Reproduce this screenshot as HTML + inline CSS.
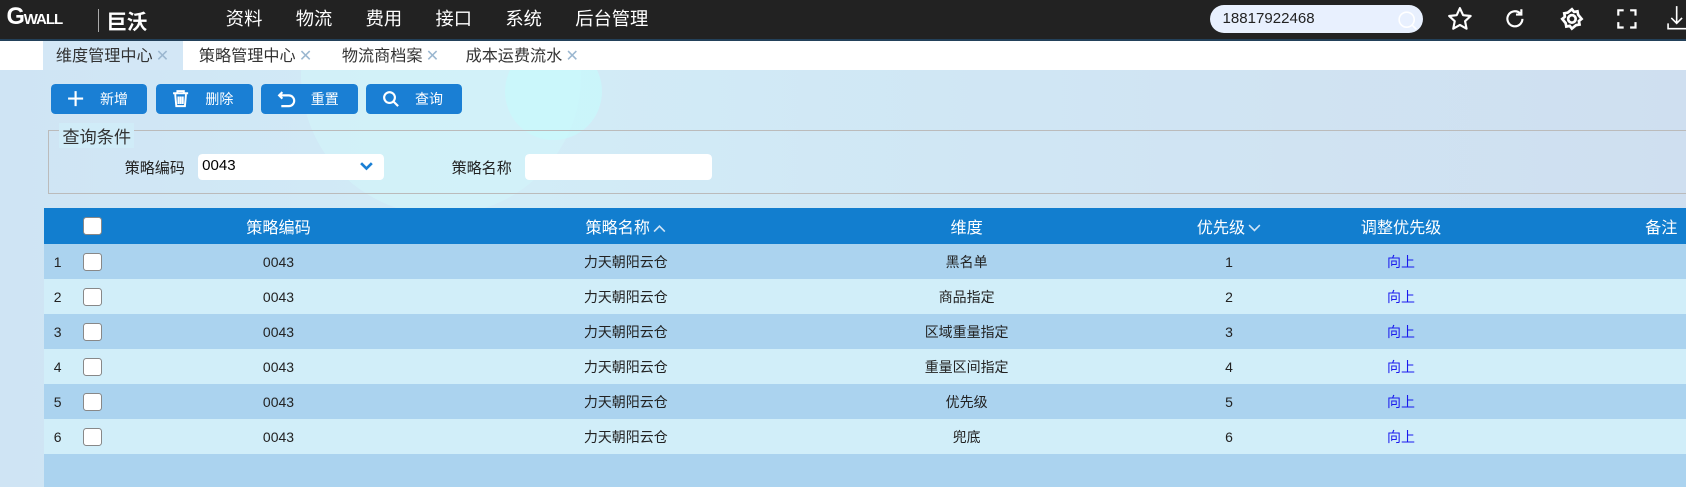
<!DOCTYPE html>
<html><head><meta charset="utf-8"><style>
html,body{margin:0;padding:0;overflow:hidden}
body{width:1686px;height:487px;font-family:"Liberation Sans","Noto Sans CJK SC",sans-serif}
#w{zoom:1.07526;width:1568px;height:453px;position:relative;background:linear-gradient(90deg,#cfe4f4,#d2ecf7 30%,#d0e6f4 60%,#cfdff0);overflow:hidden}
.a{position:absolute}
#hd{left:0;top:0;width:1568px;height:36px;background:#222}
#hd .m{top:5px;color:#fff;font-size:17px}
#line{top:36px;left:0;width:1568px;height:2px;background:#23415a}
#tabs{top:38px;left:0;width:1568px;height:27px;background:#fff}
.tab{top:38px;height:27px;line-height:29px;font-size:15px;color:#333}
.tab i{font-style:normal;color:#9bb7d0;margin-left:3px}
.btn{top:78px;height:28px;width:90px;background:#1a7fd4;border-radius:4px;color:#fff;font-size:13px;line-height:28px}
.btn span{position:absolute;left:46px}
.btn svg{position:absolute;left:15px;top:6px}
#fs{left:45px;top:121px;width:1530px;height:58px;border:1px solid #bbb;border-right:none}
.lab{font-size:14px;color:#222}
.inp{background:#fff;border-radius:4px;height:24px}
table{position:absolute;left:41px;top:193px;width:1527px;border-collapse:collapse;font-size:13px;color:#222;table-layout:fixed}
th{background:#127ecf;color:#fff;font-weight:normal;font-size:15px;height:34px;padding:0}
td{height:32.6px;padding:0;text-align:center}
tr.o td{background:#abd3ef}tr.e td{background:#d1eef9}
.cb{display:inline-block;width:15px;height:15px;background:#fff;border:1px solid #888;border-radius:3px;vertical-align:middle}
td.n{text-align:left;padding-left:9px}
.up{color:#1a1aee}
.ch{display:inline-block;vertical-align:middle;margin-left:3px}
</style></head><body><div id="w">
<div class="a" style="left:280px;top:-60px;width:260px;height:260px;border-radius:50%;background:rgba(210,245,250,.6)"></div>
<div class="a" style="left:470px;top:40px;width:90px;height:90px;border-radius:50%;background:rgba(200,250,252,.7)"></div>
<div class="a" id="hd">
 <div class="a" style="left:6px;top:4px;color:#fff;font-weight:bold;font-size:22px;letter-spacing:-1px;font-family:'Liberation Sans',sans-serif">G<span style="font-size:14px">WALL</span></div>
 <div class="a" style="left:91px;top:8px;width:1px;height:22px;background:#aaa"></div>
 <div class="a" style="left:99px;top:5px;color:#fff;font-size:19px;font-weight:bold">巨沃</div>
 <div class="a m" style="left:210px">资料</div><div class="a m" style="left:275px">物流</div><div class="a m" style="left:340px">费用</div><div class="a m" style="left:405px">接口</div><div class="a m" style="left:470px">系统</div><div class="a m" style="left:535px">后台管理</div>
 <div class="a" style="left:1125px;top:5px;width:198px;height:26px;border-radius:13px;background:#e8f0fe;font-size:14px;line-height:26px;color:#222"><span style="margin-left:12px">18817922468</span>
  <svg class="a" style="right:4px;top:4px" width="20" height="20"><circle cx="9" cy="9" r="7" fill="none" stroke="#fff" stroke-width="1.5"/><line x1="14" y1="14" x2="18" y2="18" stroke="#fff" stroke-width="1.5"/></svg></div>
 <svg class="a" style="left:1346px;top:6px" width="24" height="24" fill="none" stroke="#fff" stroke-width="2" stroke-linejoin="round"><path d="M12 2l3 6.5 7 .8-5.2 4.8 1.4 7L12 17.6 5.8 21.1l1.4-7L2 9.3l7-.8z"/></svg>
 <svg class="a" style="left:1397px;top:6px" width="24" height="24" fill="none" stroke="#fff" stroke-width="2"><path d="M19 12a7 7 0 1 1-2-5M18 3v5h-5"/></svg>
 <svg class="a" style="left:1450px;top:6px" width="24" height="24" fill="none" stroke="#fff" stroke-width="2.5"><circle cx="12" cy="12" r="3.5"/><path d="M12 3l2 2.5 3.2-.6.6 3.2L21 12l-2.5 2 .6 3.2-3.2.6L12 21l-2-2.5-3.2.6-.6-3.2L3 12l2.5-2-.6-3.2 3.2-.6z"/></svg>
 <svg class="a" style="left:1501px;top:6px" width="24" height="24" fill="none" stroke="#fff" stroke-width="2"><path d="M4 9V4h5M15 4h5v5M20 15v5h-5M9 20H4v-5"/></svg>
 <svg class="a" style="left:1550px;top:4px" width="20" height="26" fill="none" stroke="#fff" stroke-width="1.5"><path d="M9 2v16M4 13l5 5 5-5M1 18v5h18"/></svg>
</div>
<div class="a" id="line"></div>
<div class="a" id="tabs"></div>
<div class="a" style="left:40px;top:38px;width:130px;height:27px;background:#d3e7f6"></div>
<div class="a tab" style="left:52px">维度管理中心<i>✕</i></div>
<div class="a tab" style="left:185px">策略管理中心<i>✕</i></div>
<div class="a tab" style="left:318px">物流商档案<i>✕</i></div>
<div class="a tab" style="left:433px">成本运费流水<i>✕</i></div>
<div class="a btn" style="left:47px"><svg width="16" height="16" stroke="#fff" stroke-width="2"><path d="M8 1v14M1 8h14"/></svg><span>新增</span></div>
<div class="a btn" style="left:145px"><svg width="16" height="16" fill="none" stroke="#fff" stroke-width="1.8"><path d="M1 3h14M5 3V1h6v2M3 4l1 11h8l1-11M6 6v7M8 6v7M10 6v7"/></svg><span>删除</span></div>
<div class="a btn" style="left:243px"><svg width="18" height="16" fill="none" stroke="#fff" stroke-width="2"><path d="M5 2L2 5l3 3M2 5h9a5 5 0 0 1 0 10H4"/></svg><span>重置</span></div>
<div class="a btn" style="left:340px"><svg width="16" height="16" fill="none" stroke="#fff" stroke-width="2"><circle cx="7" cy="7" r="5"/><path d="M11 11l4 4"/></svg><span>查询</span></div>
<div class="a" id="fs"></div>
<div class="a" style="left:55px;top:114px;padding:0 3px;font-size:16px;color:#333;background:#d0ecf8">查询条件</div>
<div class="a lab" style="left:116px;top:146px">策略编码</div>
<div class="a inp" style="left:184px;top:143px;width:173px"><span class="a" style="left:4px;top:3px;font-size:14px">0043</span><svg class="a" style="left:151px;top:7px" width="12" height="10" fill="none" stroke="#1a7fd4" stroke-width="2.5"><path d="M1 2l5 5 5-5"/></svg></div>
<div class="a lab" style="left:420px;top:146px">策略名称</div>
<div class="a inp" style="left:488px;top:143px;width:174px"></div>
<table>
<colgroup><col style="width:30px"><col style="width:30px"><col style="width:316px"><col style="width:330px"><col style="width:304px"><col style="width:184px"><col style="width:136px"><col></colgroup>
<tr><th></th><th><span class="cb"></span></th><th>策略编码</th><th>策略名称<svg class="ch" width="12" height="8" fill="none" stroke="#cfe4f6" stroke-width="1.5"><path d="M1 7l5-5 5 5"/></svg></th><th>维度</th><th>优先级<svg class="ch" width="12" height="8" fill="none" stroke="#cfe4f6" stroke-width="1.5"><path d="M1 1l5 5 5-5"/></svg></th><th>调整优先级</th><th style="text-align:right;padding-right:8px">备注</th></tr>
<tr class="o"><td class="n">1</td><td><span class="cb"></span></td><td>0043</td><td>力天朝阳云仓</td><td>黑名单</td><td>1</td><td class="up">向上</td><td></td></tr>
<tr class="e"><td class="n">2</td><td><span class="cb"></span></td><td>0043</td><td>力天朝阳云仓</td><td>商品指定</td><td>2</td><td class="up">向上</td><td></td></tr>
<tr class="o"><td class="n">3</td><td><span class="cb"></span></td><td>0043</td><td>力天朝阳云仓</td><td>区域重量指定</td><td>3</td><td class="up">向上</td><td></td></tr>
<tr class="e"><td class="n">4</td><td><span class="cb"></span></td><td>0043</td><td>力天朝阳云仓</td><td>重量区间指定</td><td>4</td><td class="up">向上</td><td></td></tr>
<tr class="o"><td class="n">5</td><td><span class="cb"></span></td><td>0043</td><td>力天朝阳云仓</td><td>优先级</td><td>5</td><td class="up">向上</td><td></td></tr>
<tr class="e"><td class="n">6</td><td><span class="cb"></span></td><td>0043</td><td>力天朝阳云仓</td><td>兜底</td><td>6</td><td class="up">向上</td><td></td></tr>
<tr class="o"><td colspan="8" style="height:40px"></td></tr>
</table>
</div></body></html>
